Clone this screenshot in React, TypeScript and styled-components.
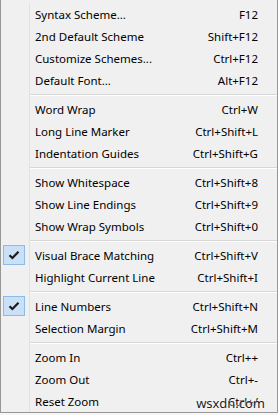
import React from 'react'
import styled, { createGlobalStyle } from 'styled-components'

type Item = { label: string; keys: string; checked?: boolean }

const groups: Item[][] = [
  [
    { label: 'Syntax Scheme...', keys: 'F12' },
    { label: '2nd Default Scheme', keys: 'Shift+F12' },
    { label: 'Customize Schemes...', keys: 'Ctrl+F12' },
    { label: 'Default Font...', keys: 'Alt+F12' },
  ],
  [
    { label: 'Word Wrap', keys: 'Ctrl+W' },
    { label: 'Long Line Marker', keys: 'Ctrl+Shift+L' },
    { label: 'Indentation Guides', keys: 'Ctrl+Shift+G' },
  ],
  [
    { label: 'Show Whitespace', keys: 'Ctrl+Shift+8' },
    { label: 'Show Line Endings', keys: 'Ctrl+Shift+9' },
    { label: 'Show Wrap Symbols', keys: 'Ctrl+Shift+0' },
  ],
  [
    { label: 'Visual Brace Matching', keys: 'Ctrl+Shift+V', checked: true },
    { label: 'Highlight Current Line', keys: 'Ctrl+Shift+I' },
  ],
  [
    { label: 'Line Numbers', keys: 'Ctrl+Shift+N', checked: true },
    { label: 'Selection Margin', keys: 'Ctrl+Shift+M' },
  ],
  [
    { label: 'Zoom In', keys: 'Ctrl++' },
    { label: 'Zoom Out', keys: 'Ctrl+-' },
    { label: 'Reset Zoom', keys: 'Ctrl+/' },
  ],
]

const Check = () => (
  <svg width="12" height="10" viewBox="0 0 12 10">
    <path d="M1.5 5.2 L4.4 8 L10.5 1.8" fill="none" stroke="#1a1a1a" strokeWidth="2.2" />
  </svg>
)

const App = () => {
  return (
    <>
      <GlobalStyle />
      <S.Menu>
        {groups.map((g, gi) => (
          <React.Fragment key={gi}>
            {gi > 0 && (
              <S.Separator>
                <S.SepGutter />
                <S.SepLine />
              </S.Separator>
            )}
            {g.map((it) => (
              <S.Row key={it.label}>
                <S.Gutter>
                  {it.checked && (
                    <S.CheckBox>
                      <Check />
                    </S.CheckBox>
                  )}
                </S.Gutter>
                <S.Label>{it.label}</S.Label>
                <S.Keys>{it.keys}</S.Keys>
              </S.Row>
            ))}
          </React.Fragment>
        ))}
        <S.Watermark>wsxdn.com</S.Watermark>
      </S.Menu>
    </>
  )
}

const GlobalStyle = createGlobalStyle`
  html, body {
    margin: 0;
    padding: 0;
    background: #f7f7f7;
  }
`

const S = {
  Menu: styled.div`
    position: relative;
    width: 278px;
    height: 413px;
    box-sizing: border-box;
    padding-top: 3px;
    background: #f0f0f0;
    border-left: 1px solid #979797;
    border-right: 1px solid #979797;
    border-bottom: 1px solid #979797;
    font-family: "Noto Sans", "Open Sans", sans-serif;
    font-size: 11.5px;
    color: #000;
    overflow: hidden;
  `,
  Row: styled.div`
    display: flex;
    align-items: center;
    height: 22px;
  `,
  Gutter: styled.div`
    width: 29px;
    height: 22px;
    box-sizing: border-box;
    border-right: 1px solid #e2e2e2;
    display: flex;
    align-items: center;
    padding-left: 2px;
    flex-shrink: 0;
  `,
  CheckBox: styled.div`
    width: 22px;
    height: 20px;
    box-sizing: border-box;
    background: #c9e0f7;
    border: 1px solid #8cbbe6;
    display: flex;
    align-items: center;
    justify-content: center;
  `,
  Label: styled.span`
    flex: 1;
    padding-left: 5px;
    white-space: nowrap;
  `,
  Keys: styled.span`
    padding-right: 19px;
    white-space: nowrap;
  `,
  Separator: styled.div`
    display: flex;
    height: 7px;
  `,
  SepGutter: styled.div`
    width: 29px;
    box-sizing: border-box;
    border-right: 1px solid #e2e2e2;
  `,
  SepLine: styled.div`
    flex: 1;
    margin-top: 3px;
    height: 1px;
    background: #d7d7d7;
    border-bottom: 1px solid #ffffff;
  `,
  Watermark: styled.div`
    position: absolute;
    right: 12px;
    bottom: 0px;
    font-size: 13px;
    color: #222;
    text-shadow: 0 0 2px #fff, 0 0 2px #fff;
  `,
}

export default App
